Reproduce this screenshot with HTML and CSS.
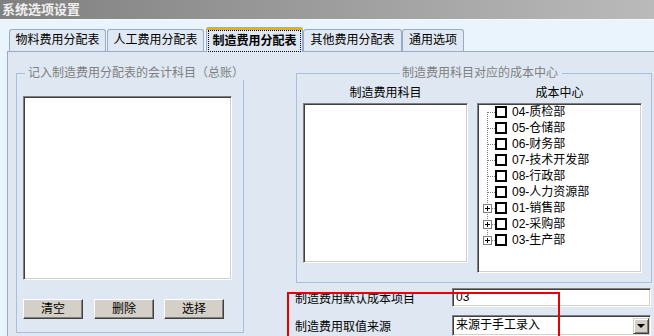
FILE: index.html
```html
<!DOCTYPE html>
<html lang="zh">
<head>
<meta charset="utf-8">
<title>系统选项设置</title>
<link rel="stylesheet" href="styles.css">
</head>
<body>
<div class="titlebar">系统选项设置</div>
<div class="tabs">
  <div class="tab t1">物料费用分配表</div>
  <div class="tab t2">人工费用分配表</div>
  <div class="tab active t3"><span class="focus">制造费用分配表</span></div>
  <div class="tab t4">其他费用分配表</div>
  <div class="tab t5">通用选项</div>
</div>
<div class="panel">
  <fieldset class="group gl">
    <legend>记入制造费用分配表的会计科目（总账）</legend>
    <div class="listbox big"></div>
    <div class="buttons">
      <button class="btn">清空</button>
      <button class="btn b2">删除</button>
      <button class="btn b3">选择</button>
    </div>
  </fieldset>
  <div class="rightcol">
    <fieldset class="group gr">
      <legend>制造费用科目对应的成本中心</legend>
      <div class="cols">
        <div class="col">
          <div class="hdr">制造费用科目</div>
          <div class="listbox l2"></div>
        </div>
        <div class="col">
          <div class="hdr">成本中心</div>
          <div class="listbox tree">
            <div class="trow"><svg class="tl" width="17" height="16"><line class="dot" x1="9.5" y1="8" x2="9.5" y2="16"/><line class="dot" x1="10" y1="8.5" x2="17" y2="8.5"/></svg><span class="cb"></span><span class="tt">04-质检部</span></div>
            <div class="trow"><svg class="tl" width="17" height="16"><line class="dot" x1="9.5" y1="0" x2="9.5" y2="16"/><line class="dot" x1="10" y1="8.5" x2="17" y2="8.5"/></svg><span class="cb"></span><span class="tt">05-仓储部</span></div>
            <div class="trow"><svg class="tl" width="17" height="16"><line class="dot" x1="9.5" y1="0" x2="9.5" y2="16"/><line class="dot" x1="10" y1="8.5" x2="17" y2="8.5"/></svg><span class="cb"></span><span class="tt">06-财务部</span></div>
            <div class="trow"><svg class="tl" width="17" height="16"><line class="dot" x1="9.5" y1="0" x2="9.5" y2="16"/><line class="dot" x1="10" y1="8.5" x2="17" y2="8.5"/></svg><span class="cb"></span><span class="tt">07-技术开发部</span></div>
            <div class="trow"><svg class="tl" width="17" height="16"><line class="dot" x1="9.5" y1="0" x2="9.5" y2="16"/><line class="dot" x1="10" y1="8.5" x2="17" y2="8.5"/></svg><span class="cb"></span><span class="tt">08-行政部</span></div>
            <div class="trow"><svg class="tl" width="17" height="16"><line class="dot" x1="9.5" y1="0" x2="9.5" y2="16"/><line class="dot" x1="10" y1="8.5" x2="17" y2="8.5"/></svg><span class="cb"></span><span class="tt">09-人力资源部</span></div>
            <div class="trow"><svg class="tl" width="17" height="16"><line class="dot" x1="9.5" y1="0" x2="9.5" y2="16"/><line class="dot" x1="14" y1="8.5" x2="17" y2="8.5"/><rect class="pbox" x="5.5" y="4.5" width="8" height="8"/><path class="plus" d="M7 8.5h5M9.5 6v5"/></svg><span class="cb"></span><span class="tt">01-销售部</span></div>
            <div class="trow"><svg class="tl" width="17" height="16"><line class="dot" x1="9.5" y1="0" x2="9.5" y2="16"/><line class="dot" x1="14" y1="8.5" x2="17" y2="8.5"/><rect class="pbox" x="5.5" y="4.5" width="8" height="8"/><path class="plus" d="M7 8.5h5M9.5 6v5"/></svg><span class="cb"></span><span class="tt">02-采购部</span></div>
            <div class="trow"><svg class="tl" width="17" height="16"><line class="dot" x1="9.5" y1="0" x2="9.5" y2="8"/><line class="dot" x1="14" y1="8.5" x2="17" y2="8.5"/><rect class="pbox" x="5.5" y="4.5" width="8" height="8"/><path class="plus" d="M7 8.5h5M9.5 6v5"/></svg><span class="cb"></span><span class="tt">03-生产部</span></div>
          </div>
        </div>
      </div>
    </fieldset>
    <div class="fields">
      <div class="frow r1">
        <span class="label">制造费用默认成本项目</span>
        <div class="input">03</div>
      </div>
      <div class="frow r2">
        <span class="label">制造费用取值来源</span>
        <div class="input combo"><span class="ctext">来源于手工录入</span><span class="ddbtn"><span class="arrow"></span></span></div>
      </div>
      <div class="redbox"></div>
    </div>
  </div>
</div>
</body>
</html>
```

FILE: styles.css
```css
html, body {
  margin: 0;
  padding: 0;
}
body {
  width: 654px;
  height: 336px;
  overflow: hidden;
  background: #eaf4fc;
  font-family: "Liberation Sans", "Noto Sans CJK SC", sans-serif;
  font-size: 12px;
  color: #000;
}

.titlebar {
  height: 19px;
  line-height: 19px;
  padding-left: 2px;
  background: linear-gradient(to right, #808080, #bababa);
  color: #f0f0f0;
  font-size: 13px;
  font-weight: bold;
  border-bottom: 1px solid #f6f9fc;
  white-space: nowrap;
}

.tabs {
  display: flex;
  align-items: flex-end;
  height: 31px;
  padding-left: 9px;
}
.tab {
  box-sizing: border-box;
  height: 22px;
  border: 1px solid #97abc4;
  border-bottom: none;
  border-radius: 3px 3px 0 0;
  background: #e0e9f3;
  text-align: center;
  line-height: 21px;
  white-space: nowrap;
}
.t1 { width: 97px; }
.t2 { width: 97px; margin-left: 1px; }
.t3 { width: 97px; margin-left: 2px; }
.t4 { width: 99px; }
.t5 { width: 62px; }
.active {
  height: 25px;
  margin-bottom: -1px;
  border-top: 3px solid #e3b300;
  border-radius: 2px 2px 0 0;
  background: #dfe8f2;
  font-weight: bold;
  padding: 0 1px;
  position: relative;
  z-index: 1;
}
.focus {
  display: block;
  box-sizing: border-box;
  height: 22px;
  border: 1px dotted #000;
  line-height: 20px;
}

.panel {
  margin-left: 7px;
  height: 284px;
  border-top: 1px solid #97abc4;
  border-left: 1px solid #97abc4;
  background: #dfe8f2;
  display: flex;
  align-items: flex-start;
  padding-left: 8px;
}

fieldset.group {
  margin: 14px 0 0;
  border: 1px solid #a9bfdc;
  padding: 0 6px;
  min-width: 0;
  box-sizing: border-box;
}
fieldset.group legend {
  color: #808080;
  line-height: 14px;
  font-size: 12px;
  white-space: nowrap;
}
.gl {
  width: 228px;
  padding-bottom: 13px !important;
}
.gl legend {
  margin-left: 2px;
  padding: 0 3px;
}

.listbox {
  box-sizing: border-box;
  background: #fff;
  border: 1px solid;
  border-color: #808080 #ffffff #ffffff #808080;
  box-shadow: inset 1px 1px #404040, inset -1px -1px #d4d0c8;
}
.big {
  margin-top: 16px;
  width: 209px;
  height: 184px;
}

.buttons {
  display: flex;
  margin-top: 19px;
}
.btn {
  box-sizing: border-box;
  width: 60px;
  height: 20px;
  padding: 0;
  background: #d4d0c8;
  border: 1px solid;
  border-color: #ffffff #404040 #404040 #ffffff;
  box-shadow: inset -1px -1px #808080;
  font-family: "Liberation Sans", "Noto Sans CJK SC", sans-serif;
  font-size: 12px;
  color: #000;
  line-height: 16px;
}
.b2 { margin-left: 11px; }
.b3 { margin-left: 10px; }

.rightcol {
  margin-left: 43px;
  width: 365px;
}
.gr {
  margin-left: 9px !important;
  width: 356px;
  padding-bottom: 9px !important;
}
.gr legend {
  margin-left: 97px;
  padding: 0 4px 0 2px;
}
.cols {
  display: flex;
  gap: 9px;
  margin-top: 6px;
}
.col {
  width: 165px;
}
.hdr {
  text-align: center;
  height: 14px;
  line-height: 14px;
  margin-bottom: 3px;
  white-space: nowrap;
}
.l2 { height: 160px; }
.tree { height: 170px; }

.trow {
  display: flex;
  align-items: center;
  height: 16px;
  white-space: nowrap;
}
.tl {
  display: block;
  flex: none;
}
.dot {
  stroke: #808080;
  stroke-width: 1;
  stroke-dasharray: 1 1;
}
.pbox {
  fill: #fff;
  stroke: #808080;
  stroke-width: 1;
}
.plus {
  stroke: #000;
  stroke-width: 1;
  fill: none;
}
.cb {
  flex: none;
  box-sizing: border-box;
  width: 12px;
  height: 12px;
  border: 2px solid #000;
  background: #fff;
  margin-right: 5px;
}
.tt {
  line-height: 16px;
}

.fields {
  position: relative;
  height: 53px;
}
.frow {
  display: flex;
  align-items: center;
}
.r1 { margin-top: 5px; }
.r2 { margin-top: 8px; }
.label {
  box-sizing: border-box;
  width: 165px;
  padding-left: 8px;
  white-space: nowrap;
}
.input {
  box-sizing: border-box;
  width: 199px;
  height: 19px;
  background: #fff;
  border: 1px solid;
  border-color: #808080 #ffffff #ffffff #808080;
  box-shadow: inset 1px 1px #404040, inset -1px -1px #d4d0c8;
  padding-left: 3px;
  line-height: 17px;
}
.combo {
  height: 21px;
  display: flex;
  align-items: flex-start;
  line-height: 19px;
}
.ctext {
  flex: 1;
  white-space: nowrap;
}
.ddbtn {
  box-sizing: border-box;
  flex: none;
  width: 16px;
  height: 16px;
  margin: 2px 1px 0 0;
  background: #d4d0c8;
  border: 1px solid;
  border-color: #d4d0c8 #404040 #404040 #d4d0c8;
  box-shadow: inset 1px 1px #ffffff, inset -1px -1px #808080;
  display: flex;
  align-items: center;
  justify-content: center;
}
.arrow {
  width: 0;
  height: 0;
  border-left: 4px solid transparent;
  border-right: 4px solid transparent;
  border-top: 4px solid #000;
}
.redbox {
  position: absolute;
  left: 0;
  top: 4px;
  width: 273px;
  height: 48px;
  box-sizing: border-box;
  border: 2px solid #e80000;
  pointer-events: none;
}
```
